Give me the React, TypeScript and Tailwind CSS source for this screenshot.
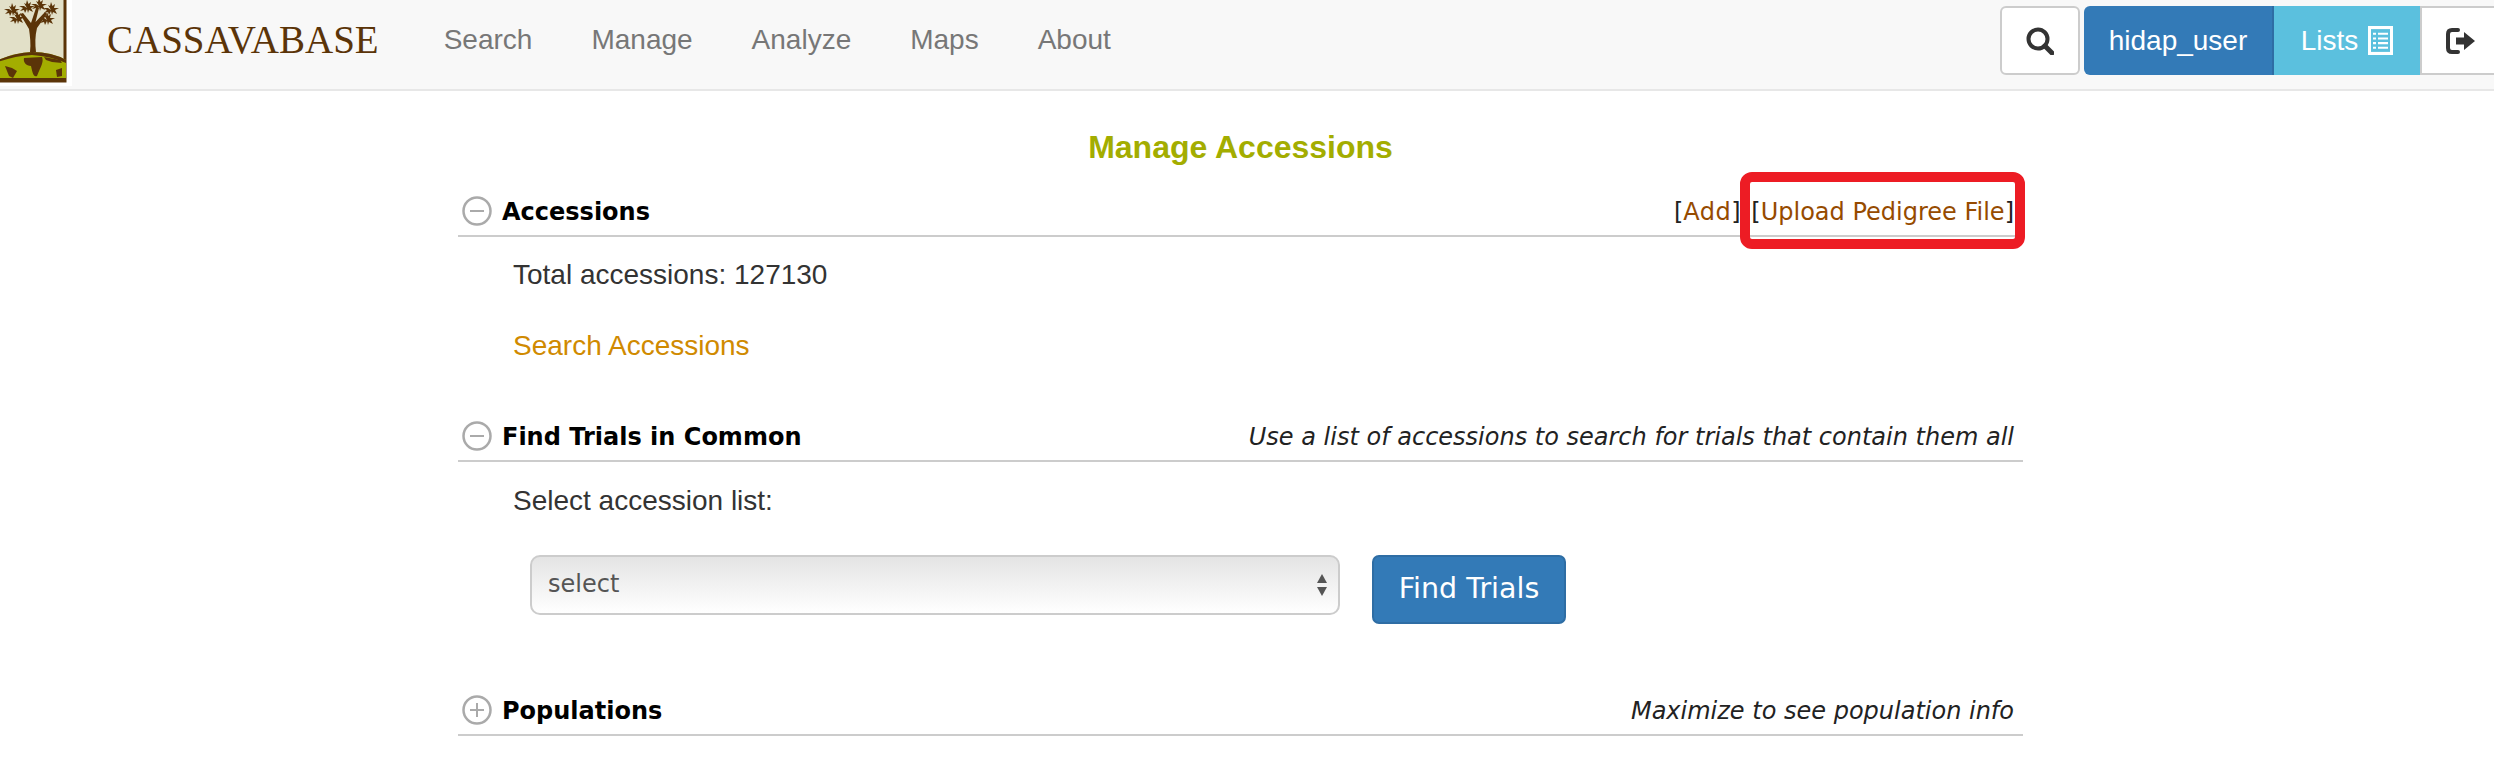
import React from "react";

const leaf = "M0 0L-3 -5L-1 -4L0 -8L1.500 -4L4 -6L3 -2L8 -2L4 0L6 4L2 2L1 5L0 1L-2 5L-3 2L-7 3L-4 0L-8 -2L-3 -2Z";

function Logo() {
  return (
    <div className="w-[72px] h-[86px] bg-white shrink-0 overflow-hidden">
      <svg width="68" height="83" viewBox="0 0 68 83">
        <rect x="-3" y="-3" width="68" height="84" fill="#e2e0c8" stroke="#5b3408" strokeWidth="3" />
        <path d="M-2 60 Q14 53 32 52 Q52 52 66 60 V81 H-2Z" fill="#a3ad00" />
        <path d="M-2 60 Q14 53 32 52 Q52 52 66 60 L66 63 Q50 56 32 55 Q14 56 -2 62Z" fill="#5b3408" />
        <path d="M30 52 C31 44 30 36 29 29 L20 14 L23 13 L31 23 L36 8 L39 8 L35.500 22 L45 12 L47 14 L37 28 C35 36 35 44 36 52Z" fill="#5b3408" />
        <g fill="#5b3408">
          <path d={leaf} transform="translate(12 11)" />
          <path d={leaf} transform="translate(27 8)" />
          <path d={leaf} transform="translate(39 6)" />
          <path d={leaf} transform="translate(51 10)" />
          <path d={leaf} transform="translate(17 19)" />
          <path d={leaf} transform="translate(47 20)" />
          <path d="M24 58 L42 57 C44 62 41 66 37 76 C33 78 32 70 31 66 C26 66 23 62 24 58Z" />
          <path d="M5 66 L12 68 L17 71 L13 78 L9 76Z" />
          <path d="M44 57 L60 60 L62 63 L52 62 L46 60Z" />
          <path d="M56 70 L62 68 L62 76 L57 77Z" />
          <path d="M0 78 H66 V81 H0Z" />
        </g>
      </svg>
    </div>
  );
}

function Section({
  open,
  title,
  right,
}: {
  open: boolean;
  title: string;
  right: React.ReactNode;
}) {
  return (
    <div className="flex items-center h-[38px] border-b-2 border-[#cccccc] pl-[4px] pr-[9px] box-content pb-[5px]">
      <svg width="30" height="30" viewBox="0 0 30 30" className="shrink-0">
        <circle cx="15" cy="15" r="13.500" fill="none" stroke="#aaaaaa" strokeWidth="2.500" />
        <path d={open ? "M8 15H22" : "M8 15H22M15 8V22"} stroke="#aaaaaa" strokeWidth="2" />
      </svg>
      <span className="ml-[10px] mt-[2px] text-[24px] font-bold text-black font-['DejaVu_Sans',sans-serif]">{title}</span>
      <div className="ml-auto mt-[2px] font-['DejaVu_Sans',sans-serif] text-[24px] text-[#222222]">{right}</div>
    </div>
  );
}

export default function App() {
  return (
    <div className="w-[2494px] h-[771px] overflow-hidden bg-white font-['Liberation_Sans',sans-serif] text-[28px] text-[#333333]">
      <nav className="h-[91px] bg-[#f8f8f8] border-b-2 border-[#e7e7e7] flex items-start">
        <Logo />
        <span className="ml-[35px] mt-[17px] font-['Liberation_Serif',serif] text-[39px] leading-[46px] text-[#5b3408]">CASSAVABASE</span>
        <div className="ml-[65px] mt-[18px] flex gap-[59px] text-[#777777] text-[28px] leading-[44px]">
          <span>Search</span>
          <span>Manage</span>
          <span>Analyze</span>
          <span>Maps</span>
          <span>About</span>
        </div>
        <div className="ml-auto mt-[6px] flex h-[69px] w-[494px] shrink-0">
          <div className="w-[80px] h-full rounded-[6px] border-2 border-[#cccccc] bg-white flex items-center justify-center">
            <svg width="28" height="28" viewBox="0 0 28 28" fill="none" stroke="#333333">
              <circle cx="12" cy="12" r="9.500" strokeWidth="4" />
              <path d="M19 19L26 26" strokeWidth="5" strokeLinecap="round" />
            </svg>
          </div>
          <div className="ml-[4px] w-[190px] h-full rounded-l-[6px] bg-[#337ab7] border-r-2 border-[#2e6da4] text-white flex items-center justify-center">hidap_user</div>
          <div className="w-[146px] h-full bg-[#5bc0de] text-white flex items-center justify-center gap-[10px]">
            <span>Lists</span>
            <svg width="25" height="29" viewBox="0 0 25 28" preserveAspectRatio="none">
              <rect x="0" y="0" width="25" height="28" fill="white" />
              <rect x="3" y="3" width="19" height="22" fill="#5bc0de" />
              <path d="M5 7.500H8M10 7.500H20M5 12H8M10 12H20M5 16.500H8M10 16.500H20M5 21H8M10 21H20" stroke="white" strokeWidth="2" />
            </svg>
          </div>
          <div className="w-[74px] h-full border-2 border-r-0 border-[#cccccc] bg-white flex items-center pl-[24px]">
            <svg width="30" height="26" viewBox="0 0 30 26">
              <path d="M12 2H6C3.500 2 2 3.500 2 6V20C2 22.500 3.500 24 6 24H12" fill="none" stroke="#333333" strokeWidth="4" strokeLinecap="round" />
              <path d="M10 9.500H18V4L29 13L18 22V16.500H10Z" fill="#333333" />
            </svg>
          </div>
        </div>
      </nav>

      <main className="relative ml-[458px] w-[1565px]">
        <h1 className="pt-[37px] text-center text-[#a3ad00] font-bold text-[32px] leading-[38px]">Manage Accessions</h1>

        <div className="mt-[26px]">
          <Section
            open
            title="Accessions"
            right={
              <span>
                [<span className="text-[#964b00] tracking-[0.5px]">Add</span>]<span className="ml-[3px]"> </span>[<span className="text-[#964b00]">Upload Pedigree File</span>]
              </span>
            }
          />
        </div>
        <div className="absolute left-[1282px] top-[81px] w-[285px] h-[77px] border-[10px] border-[#ed1c24] rounded-[12px]" />

        <div className="pl-[55px]">
          <p className="mt-[20px] leading-[36px]">Total accessions: 127130</p>
          <p className="mt-[35px] leading-[36px] text-[#d08a00]">Search Accessions</p>
        </div>

        <div className="mt-[53px]">
          <Section open title="Find Trials in Common" right={<i>Use a list of accessions to search for trials that contain them all</i>} />
        </div>
        <div className="pl-[55px]">
          <p className="mt-[21px] leading-[36px]">Select accession list:</p>
        </div>
        <div className="mt-[36px] ml-[72px] flex items-start gap-[32px]">
          <div className="w-[810px] h-[60px] rounded-[10px] border-2 border-[#cccccc] bg-gradient-to-b from-[#e4e4e4] to-[#ffffff] flex items-center justify-between pl-[16px] pr-[10px] font-['DejaVu_Sans',sans-serif] text-[24px] text-[#555555]">
            <span className="-mt-[3px]">select</span>
            <svg width="12" height="24" viewBox="0 0 12 24" fill="#555555">
              <path d="M6 1L11 10H1Z" />
              <path d="M6 23L11 14H1Z" />
            </svg>
          </div>
          <div className="w-[194px] h-[69px] rounded-[7px] bg-[#337ab7] border-2 border-[#2e6da4] text-white flex items-center justify-center font-['DejaVu_Sans',sans-serif] text-[28.500px]">Find Trials</div>
        </div>

        <div className="mt-[67px]">
          <Section open={false} title="Populations" right={<i>Maximize to see population info</i>} />
        </div>
      </main>
    </div>
  );
}
